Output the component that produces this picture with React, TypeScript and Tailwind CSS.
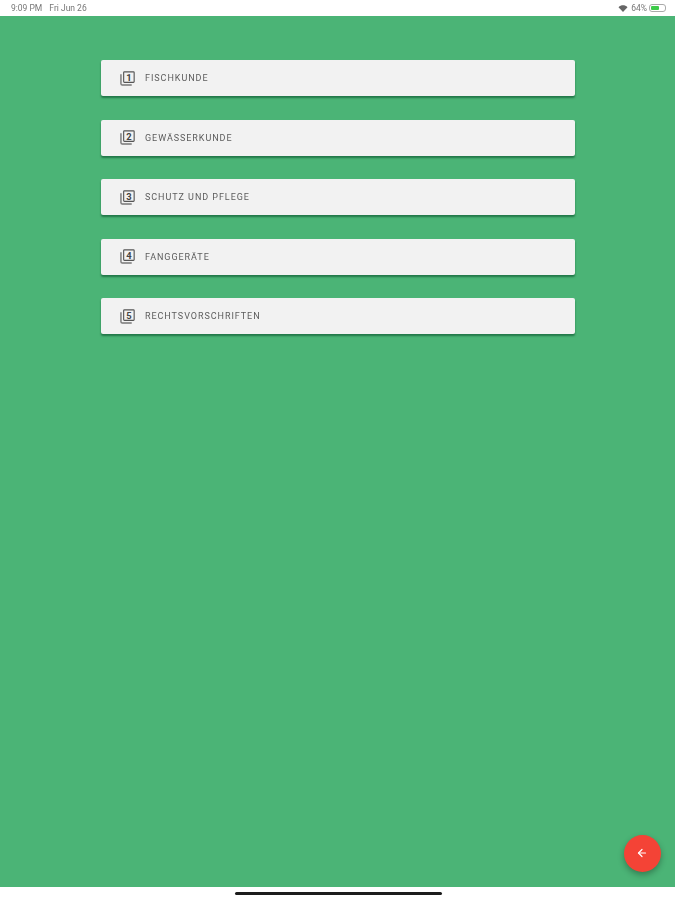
import { ArrowLeft } from 'lucide-react';

const topics = ['Fischkunde', 'Gewässerkunde', 'Schutz und Pflege', 'Fanggeräte', 'Rechtsvorschriften'];

// Stacked-pages icon with the chapter number inside, like Material's filter_1..5.
function ChapterIcon({ n }: { n: number }) {
  return (
    <svg width="15" height="15" viewBox="0 0 16 16" fill="none" className="shrink-0">
      <path d="M1 3.5V13.5C1 14.4 1.6 15 2.5 15H12.5" stroke="#777777" strokeWidth="1.5" />
      <rect x="3.9" y="0.9" width="11.2" height="11.2" rx="0.8" stroke="#555555" strokeWidth="1.2" />
      <text x="9.5" y="10.2" textAnchor="middle" fontSize="10" fontWeight="700" fontFamily="Roboto, sans-serif" fill="#444444">
        {n}
      </text>
    </svg>
  );
}

export default function App() {
  return (
    <div className="relative flex h-[900px] w-[675px] flex-col overflow-hidden bg-white font-['Roboto',sans-serif]">
      <div className="flex h-4 shrink-0 items-center justify-between pl-[11px] pr-[9px] text-[8.5px] text-[#777777] blur-[0.35px]">
        <div className="flex gap-[7px]">
          <span>9:09 PM</span>
          <span>Fri Jun 26</span>
        </div>
        <div className="flex items-center gap-[2px]">
          <svg width="10" height="7" viewBox="0 0 9 7" className="mr-[1px]">
            <path d="M0 2.2C2.6 -0.4 6.4 -0.4 9 2.2L4.5 7Z" fill="#666666" />
          </svg>
          <span>64%</span>
          <div className="flex h-[8px] w-[17px] items-stretch rounded-[3px] border border-[#aaaaaa] p-[1px]">
            <div className="w-[8px] rounded-[1px] bg-[#3ecb4a]" />
          </div>
        </div>
      </div>

      <main className="flex h-[871px] shrink-0 flex-col gap-[23.5px] bg-[#4bb476] pl-[101px] pt-[44px]">
        {topics.map((topic, i) => (
          <div
            key={topic}
            className="flex h-9 w-[474px] items-center gap-[10px] rounded-[2px] bg-[#f2f2f2] pl-[19px] shadow-[0_2px_2px_rgba(0,70,35,0.55)]"
          >
            <ChapterIcon n={i + 1} />
            <span className="translate-y-[0.5px] text-[9px] uppercase tracking-[0.95px] text-[#5c5c5c] blur-[0.3px]">{topic}</span>
          </div>
        ))}
      </main>

      <div className="flex flex-1 items-center justify-center pl-[1px]">
        <div className="h-[3px] w-[207px] rounded-full bg-[#1c1c1c]" />
      </div>

      <button className="absolute left-[623.5px] top-[834.5px] flex h-[37px] w-[37px] items-center justify-center rounded-full bg-[#f44336] shadow-[0_3px_6px_rgba(0,0,0,0.3)]">
        <ArrowLeft size={12} color="#ffffff" strokeWidth={2.4} />
      </button>
    </div>
  );
}
